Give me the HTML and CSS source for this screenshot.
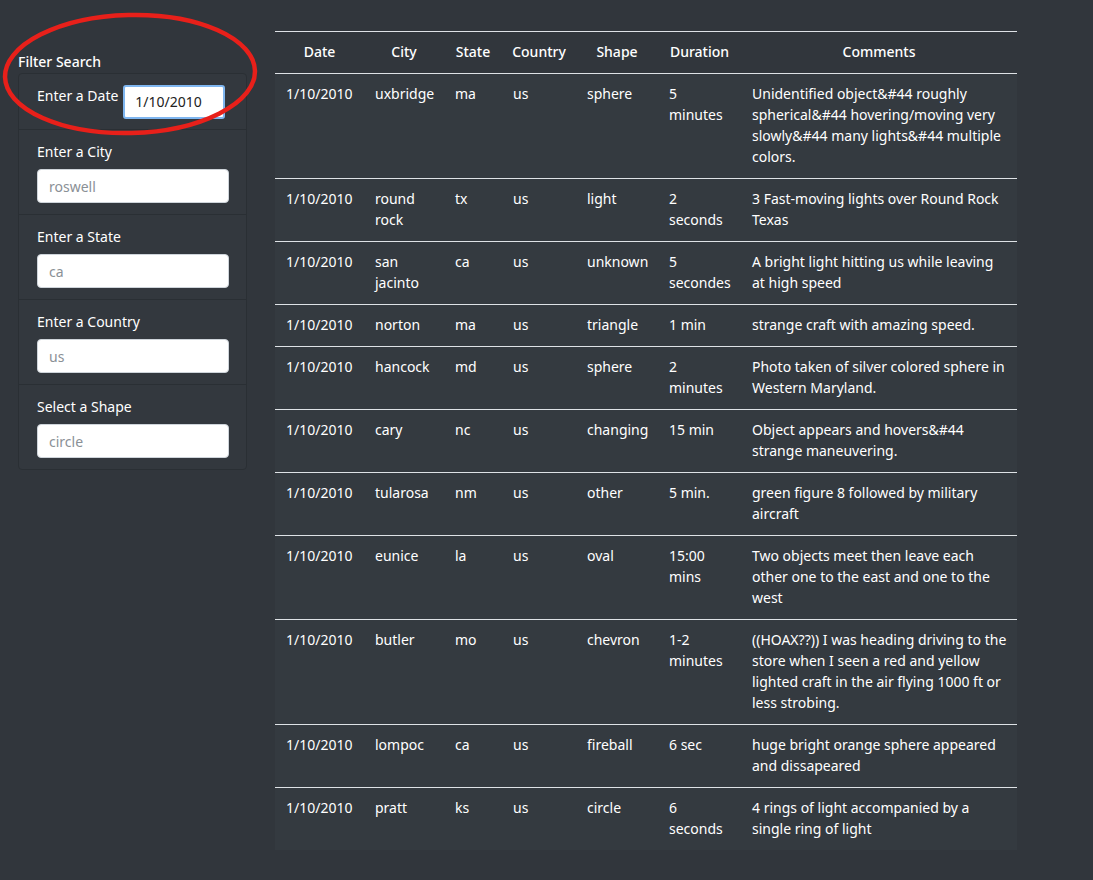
FILE: index.html
```html
<!DOCTYPE html>
<html lang="en">
<head>
<meta charset="utf-8">
<title>UFO Sightings</title>
<link rel="stylesheet" href="styles.css">
</head>
<body>
<div class="page">
  <aside class="sidebar">
    <h5 class="filter-title">Filter Search</h5>
    <ul class="filter-list">
      <li class="filter-item inline">
        <label for="datetime">Enter a Date</label>
        <input id="datetime" class="field focused" type="text" value="1/10/2010">
      </li>
      <li class="filter-item">
        <label for="city">Enter a City</label>
        <input id="city" class="field" type="text" placeholder="roswell">
      </li>
      <li class="filter-item">
        <label for="state">Enter a State</label>
        <input id="state" class="field" type="text" placeholder="ca">
      </li>
      <li class="filter-item">
        <label for="country">Enter a Country</label>
        <input id="country" class="field" type="text" placeholder="us">
      </li>
      <li class="filter-item">
        <label for="shape">Select a Shape</label>
        <input id="shape" class="field" type="text" placeholder="circle">
      </li>
    </ul>
  </aside>
  <main class="results">
    <table class="ufo-table">
      <colgroup>
        <col class="c-date"><col class="c-city"><col class="c-state"><col class="c-country"><col class="c-shape"><col class="c-duration"><col class="c-comments">
      </colgroup>
      <thead>
        <tr><th>Date</th><th>City</th><th>State</th><th>Country</th><th>Shape</th><th>Duration</th><th>Comments</th></tr>
      </thead>
      <tbody>
        <tr><td>1/10/2010</td><td>uxbridge</td><td>ma</td><td>us</td><td>sphere</td><td>5 minutes</td><td class="comment">Unidentified object&amp;#44 roughly spherical&amp;#44 hovering/moving very slowly&amp;#44 many lights&amp;#44 multiple colors.</td></tr>
        <tr><td>1/10/2010</td><td>round rock</td><td>tx</td><td>us</td><td>light</td><td>2 seconds</td><td class="comment">3 Fast-moving lights over Round Rock Texas</td></tr>
        <tr><td>1/10/2010</td><td>san jacinto</td><td>ca</td><td>us</td><td>unknown</td><td>5 secondes</td><td class="comment">A bright light hitting us while leaving at high speed</td></tr>
        <tr><td>1/10/2010</td><td>norton</td><td>ma</td><td>us</td><td>triangle</td><td>1 min</td><td class="comment">strange craft with amazing speed.</td></tr>
        <tr><td>1/10/2010</td><td>hancock</td><td>md</td><td>us</td><td>sphere</td><td>2 minutes</td><td class="comment">Photo taken of silver colored sphere in Western Maryland.</td></tr>
        <tr><td>1/10/2010</td><td>cary</td><td>nc</td><td>us</td><td>changing</td><td>15 min</td><td class="comment">Object appears and hovers&amp;#44 strange maneuvering.</td></tr>
        <tr><td>1/10/2010</td><td>tularosa</td><td>nm</td><td>us</td><td>other</td><td>5 min.</td><td class="comment">green figure 8 followed by military aircraft</td></tr>
        <tr><td>1/10/2010</td><td>eunice</td><td>la</td><td>us</td><td>oval</td><td>15:00 mins</td><td class="comment">Two objects meet then leave each other one to the east and one to the west</td></tr>
        <tr><td>1/10/2010</td><td>butler</td><td>mo</td><td>us</td><td>chevron</td><td>1-2 minutes</td><td class="comment">((HOAX??)) I was heading driving to the store when I seen a red and yellow lighted craft in the air flying 1000 ft or less strobing.</td></tr>
        <tr><td>1/10/2010</td><td>lompoc</td><td>ca</td><td>us</td><td>fireball</td><td>6 sec</td><td class="comment">huge bright orange sphere appeared and dissapeared</td></tr>
        <tr><td>1/10/2010</td><td>pratt</td><td>ks</td><td>us</td><td>circle</td><td>6 seconds</td><td class="comment">4 rings of light accompanied by a single ring of light</td></tr>
      </tbody>
    </table>
  </main>
</div>
<svg class="annotation" width="270" height="150" viewBox="0 0 270 150" aria-hidden="true">
  <ellipse cx="130" cy="74" rx="125" ry="59" fill="none" stroke="#e8201a" stroke-width="4.5" transform="rotate(-1.5 130 74)"/>
</svg>
</body>
</html>
```

FILE: styles.css
```css
html, body {
  margin: 0;
  padding: 0;
  background: #31363c;
  color: #fff;
  font-family: "Noto Sans", "Open Sans", "Liberation Sans", sans-serif;
  font-size: 14px;
  line-height: 21px;
}

.page {
  display: flex;
  align-items: flex-start;
  padding: 31px 0 0 18px;
  gap: 28px;
}

.sidebar {
  width: 229px;
  flex: none;
  padding-top: 20px;
}

.filter-title {
  margin: 0 0 1px 0;
  font-size: 14px;
  font-weight: 500;
  line-height: 21px;
}

.filter-list {
  list-style: none;
  margin: 0;
  padding: 0;
  border: 1px solid #2a2f34;
  border-radius: 4px;
  background: #33383e;
}

.filter-item {
  display: flex;
  flex-direction: column;
  padding: 11px 17px 10px 18px;
  border-top: 1px solid #2a2f34;
  height: 63px;
}

.filter-item:first-child {
  border-top: none;
}

.filter-item.inline {
  flex-direction: row;
  align-items: center;
  height: 55px;
  padding: 0 0 0 18px;
  gap: 5px;
}

.filter-item label {
  line-height: 21px;
  margin-bottom: 7px;
}

.filter-item.inline label {
  margin: -12px 0 0 0;
}

.field {
  box-sizing: border-box;
  height: 34px;
  width: 192px;
  padding: 0 11px;
  border: 1px solid #ced4da;
  border-radius: 4px;
  background: #fff;
  color: #495057;
  font-family: inherit;
  font-size: 14px;
  outline: none;
}

.field::placeholder {
  color: #8a9096;
}

.field.focused {
  width: 102px;
  height: 34px;
  border: 2px solid #7fb6f0;
  border-radius: 3px;
  color: #222;
  padding: 0 10px;
  font-size: 14px;
}

.results {
  width: 742px;
  flex: none;
}

.ufo-table {
  width: 742px;
  table-layout: fixed;
  border-collapse: collapse;
  background: #343a40;
}

.c-date { width: 89px; }
.c-city { width: 80px; }
.c-state { width: 58px; }
.c-country { width: 74px; }
.c-shape { width: 82px; }
.c-duration { width: 83px; }
.c-comments { width: 276px; }

.ufo-table th {
  font-weight: 500;
  text-align: center;
  padding: 9px 4px 11px;
  border-top: 1px solid #dee2e6;
  border-bottom: 1px solid #dee2e6;
  background: #31363c;
}

.ufo-table td {
  vertical-align: top;
  text-align: left;
  padding: 9px 10px 11px 11px;
  border-bottom: 1px solid #dee2e6;
}

.ufo-table td.comment {
  padding-right: 9px;
}

.ufo-table tbody tr:last-child td {
  border-bottom: none;
}

.annotation {
  position: absolute;
  left: 0;
  top: 0;
  pointer-events: none;
}
```
